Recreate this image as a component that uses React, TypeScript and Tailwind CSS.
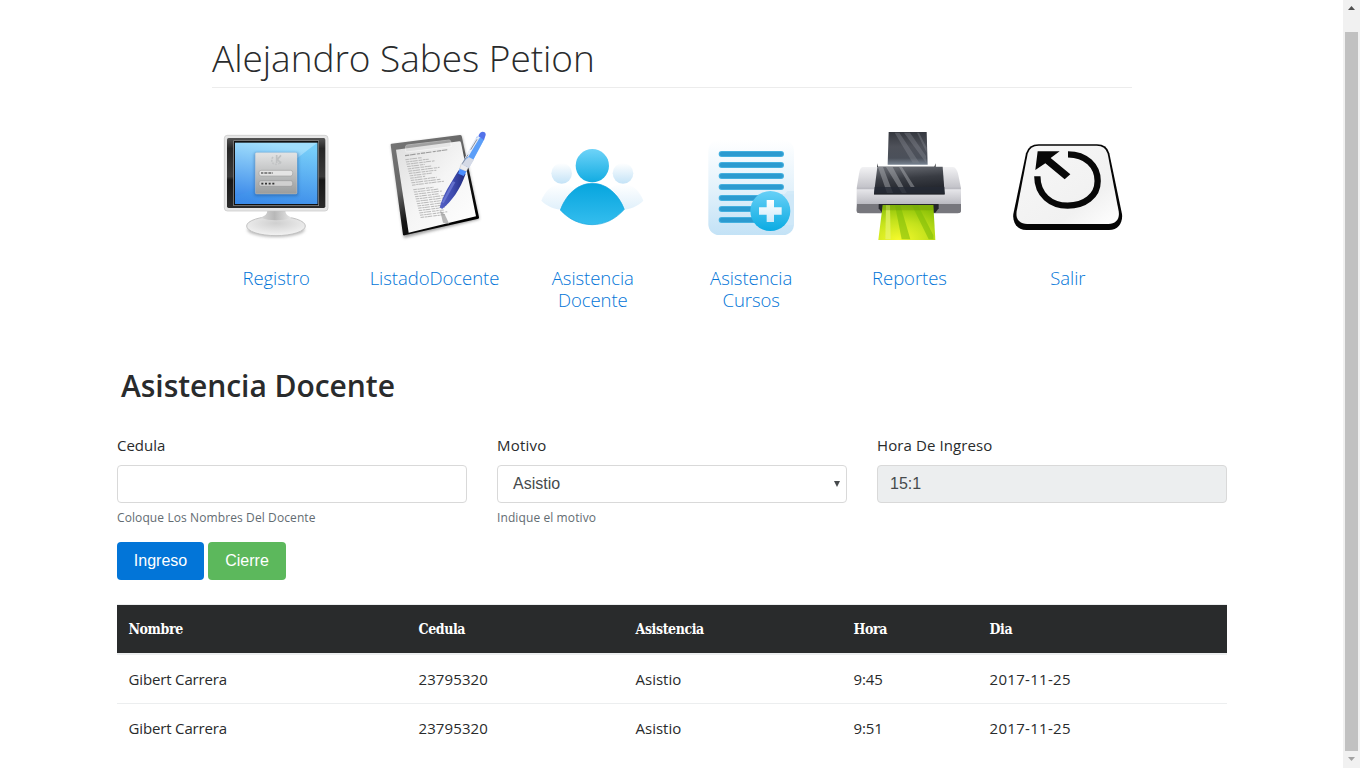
import type { ReactNode } from "react";

function Icon({ box, children }: { box: string; children: ReactNode }) {
  return (
    <svg viewBox={box} className="block h-32 w-32 overflow-visible">
      {children}
    </svg>
  );
}

function MonitorIcon() {
  return (
    <Icon box="36 21 384 384">
      <defs>
        <linearGradient id="mScreen" x1="0.3" y1="0" x2="0.1" y2="1">
          <stop offset="0" stopColor="#a0defc" />
          <stop offset="1" stopColor="#3181e8" />
        </linearGradient>
        <linearGradient id="mGlare" x1="0.6" y1="0" x2="0.4" y2="1">
          <stop offset="0" stopColor="#5cc4f7" />
          <stop offset="1" stopColor="#3f90ea" />
        </linearGradient>
        <linearGradient id="mPanel" x1="0" y1="0" x2="0" y2="1">
          <stop offset="0" stopColor="#e3e4e5" />
          <stop offset="1" stopColor="#9a9c9c" />
        </linearGradient>
        <linearGradient id="mBezel" x1="0" y1="0" x2="0" y2="1">
          <stop offset="0" stopColor="#555" />
          <stop offset="0.15" stopColor="#262626" />
          <stop offset="0.55" stopColor="#3a3a3a" />
          <stop offset="0.6" stopColor="#181818" />
          <stop offset="1" stopColor="#2b2b2b" />
        </linearGradient>
        <linearGradient id="mNeck" x1="0" y1="0" x2="1" y2="0">
          <stop offset="0" stopColor="#d8d8d8" />
          <stop offset="0.45" stopColor="#b8b8b8" />
          <stop offset="1" stopColor="#e8e8e8" />
        </linearGradient>
        <radialGradient id="mFoot" cx="0.5" cy="0.35" r="0.6">
          <stop offset="0" stopColor="#cfcfcf" />
          <stop offset="1" stopColor="#f0f0f0" />
        </radialGradient>
        <filter id="mBlur" x="-20%" y="-50%" width="140%" height="200%">
          <feGaussianBlur stdDeviation="5" />
        </filter>
      </defs>
      <ellipse cx="228" cy="344" rx="86" ry="22" fill="#777" opacity="0.5" filter="url(#mBlur)" />
      <ellipse cx="228" cy="333" rx="88" ry="29" fill="url(#mFoot)" stroke="#c2c2c2" strokeWidth="3" />
      <path d="M202 284h54c0 14 6 17 20 24-26 10-68 10-95 0 15-7 21-10 21-24z" fill="url(#mNeck)" />
      <rect x="73" y="61" width="311" height="227" rx="9" fill="#e6e6e6" stroke="#c4c4c4" strokeWidth="2" />
      <rect x="81" y="69" width="295" height="210" rx="5" fill="url(#mBezel)" />
      <rect x="101" y="77" width="255" height="195" fill="#111" stroke="#999" strokeWidth="2" />
      <rect x="105" y="83" width="247" height="184" fill="url(#mScreen)" />
      <path d="M352 83v184H105v-22C190 220 260 150 352 83z" fill="url(#mGlare)" opacity="0.6" />
      <rect x="163" y="113" width="132" height="130" rx="5" fill="#174a86" opacity="0.45" filter="url(#mBlur)" />
      <rect x="166" y="113" width="125" height="124" rx="4" fill="url(#mPanel)" stroke="#ddd" />
      <path d="M230 120v24M243 121l-11 12 11 12" fill="none" stroke="#bfc1c2" strokeWidth="5" />
      <path d="M219 126c-7 9-4 22 9 22 9 0 13-5 14-9" fill="none" stroke="#c3c5c6" strokeWidth="5" strokeDasharray="6 3" />
      <rect x="177" y="166" width="101" height="17" rx="6" fill="#e4e4e4" stroke="#a2a2a2" strokeWidth="2" />
      <rect x="177" y="197" width="101" height="17" rx="6" fill="#d0d0d0" stroke="#9a9a9a" strokeWidth="2" />
      <path d="M183 174h35" stroke="#666" strokeWidth="5" strokeDasharray="6 2 3 1" />
      <path d="M184 206h40" stroke="#333" strokeWidth="5" strokeDasharray="6 5" />
    </Icon>
  );
}

const verses = [52, 70, 86, 54, 72, 96, 84, 68, 46, 80, 90, 98, 0, 62, 78, 84, 72, 88, 92, 82, 86, 88, 80, 76, 84, 76];

function ClipboardIcon() {
  return (
    <Icon box="0 21 384 384">
      <defs>
        <linearGradient id="cBoard" x1="0" y1="0" x2="0.6" y2="1">
          <stop offset="0" stopColor="#777" />
          <stop offset="0.45" stopColor="#666" />
          <stop offset="0.7" stopColor="#161616" />
          <stop offset="1" stopColor="#000" />
        </linearGradient>
        <linearGradient id="cPaper" x1="0" y1="0" x2="1" y2="1">
          <stop offset="0" stopColor="#dedede" />
          <stop offset="0.5" stopColor="#f5f5f5" />
          <stop offset="1" stopColor="#fff" />
        </linearGradient>
        <linearGradient id="cPen" x1="0" y1="0" x2="1" y2="0">
          <stop offset="0" stopColor="#5561c4" />
          <stop offset="0.5" stopColor="#3f4cb0" />
          <stop offset="1" stopColor="#202b7c" />
        </linearGradient>
        <filter id="cBlur" x="-20%" y="-20%" width="140%" height="140%">
          <feGaussianBlur stdDeviation="4" />
        </filter>
      </defs>
      <path d="M64 91L275 64 328 313 102 369z" fill="#444" opacity="0.5" filter="url(#cBlur)" />
      <path d="M65 86Q62 86 62 89L99 359Q100 362 104 361L325 311Q328 310 327 307L275 63Q274 60 270 60z" fill="url(#cBoard)" />
      <path d="M78 104L268 79Q272 79 273 83L318 304 116 353z" fill="url(#cPaper)" />
      <path d="M107 94Q108 90 112 90L237 75Q241 75 242 79L244 95 110 111Q107 111 107 107z" fill="#ddd" opacity="0.45" stroke="#fff" strokeWidth="3" />
      <g transform="rotate(-8 105 122)">
        <path d="M105 122h130" stroke="#9c9c9c" strokeWidth="3.5" strokeDasharray="13 2 17 4 9 3" />
      </g>
      <g transform="translate(106 134) skewX(8) rotate(-7)">
        {verses.map((width, index) => (
          <path key={index} d={`M0 ${index * 7}h${width}`} stroke="#bababa" strokeWidth="3" strokeDasharray="11 2 7 1 15 3" />
        ))}
      </g>
      <path d="M210 286L219 323 238 327 225 300z" fill="#9a9a9a" opacity="0.7" />
      <path d="M266 166L287 176C270 224 246 258 216 282L209 279C217 242 242 205 266 166z" fill="url(#cPen)" />
      <path d="M248 199L256 202 221 265 216 262z" fill="#7480d8" opacity="0.7" />
      <path d="M215 279l-7 13-1-14z" fill="#eee" />
      <path d="M269 160L290 169 281 183 265 176z" fill="#4b8fff" />
      <path d="M274 146L296 157 289 169 269 161z" fill="#ececef" stroke="#aaa" strokeWidth="1" />
      <path d="M321 64L342 74 297 158 275 147z" fill="#9fc3f8" />
      <path d="M331 67L343 72 308 137 289 130z" fill="#5b9ef8" />
      <path d="M296 126L312 134 297 158 275 147z" fill="#d5dae6" />
      <path d="M313 75l12-10 4 2-34 58-12 6z" fill="#e9eef8" />
      <path d="M294 119L277 146M321 73L302 104" stroke="#8a8f9a" strokeWidth="3" />
      <path d="M325 64Q329 51 337 50 348 50 347 60L342 75z" fill="#5272ea" />
    </Icon>
  );
}

function PeopleIcon() {
  return (
    <Icon box="-4 -24 384 384">
      <defs>
        <linearGradient id="pHead" x1="0" y1="0" x2="0" y2="1">
          <stop offset="0" stopColor="#6ed3f8" />
          <stop offset="1" stopColor="#12ace2" />
        </linearGradient>
        <linearGradient id="pBody" x1="0" y1="0" x2="0" y2="1">
          <stop offset="0" stopColor="#06a5de" />
          <stop offset="1" stopColor="#34bdee" />
        </linearGradient>
        <linearGradient id="pSide" x1="0" y1="0" x2="0" y2="1">
          <stop offset="0" stopColor="#fff" />
          <stop offset="1" stopColor="#c4e3f7" />
        </linearGradient>
        <linearGradient id="pSideBody" x1="0" y1="0" x2="0" y2="1">
          <stop offset="0" stopColor="#fff" />
          <stop offset="1" stopColor="#e0f0fb" />
        </linearGradient>
      </defs>
      <circle cx="94" cy="130" r="31" fill="url(#pSide)" />
      <circle cx="278" cy="130" r="31" fill="url(#pSide)" />
      <path d="M33 212C44 184 62 163 94 162 130 162 150 190 156 222 115 252 60 240 33 212z" fill="url(#pSideBody)" />
      <path d="M339 212C328 184 310 163 278 162 242 162 222 190 216 222 257 252 312 240 339 212z" fill="url(#pSideBody)" />
      <path d="M87 241C106 193 140 157 186 157S266 193 285 239C257 270 224 287 186 287S116 271 87 241z" fill="#fff" />
      <circle cx="186" cy="107" r="50" fill="url(#pHead)" />
      <path d="M90 240C107 193 143 160 186 160S265 193 282 238C255 268 222 284 186 284S116 269 90 240z" fill="url(#pBody)" stroke="#12a5de" strokeWidth="2" />
    </Icon>
  );
}

function CourseIcon() {
  return (
    <Icon box="-24 -24 384 384">
      <defs>
        <linearGradient id="lPage" x1="0" y1="0" x2="0" y2="1">
          <stop offset="0" stopColor="#fff" />
          <stop offset="0.5" stopColor="#e4f2fb" />
          <stop offset="1" stopColor="#c3e2f6" />
        </linearGradient>
        <linearGradient id="lDisc" x1="0" y1="0" x2="0" y2="1">
          <stop offset="0" stopColor="#67d0f7" />
          <stop offset="1" stopColor="#0babe2" />
        </linearGradient>
        <linearGradient id="lPlus" x1="0" y1="0" x2="0" y2="1">
          <stop offset="0" stopColor="#fff" />
          <stop offset="1" stopColor="#cdeafa" />
        </linearGradient>
      </defs>
      <rect x="40" y="30" width="257" height="285" rx="32" fill="url(#lPage)" />
      {[72, 105, 138, 171, 204, 237, 270].map((y) => (
        <g key={y} strokeLinecap="round">
          <path d={`M80 ${y}h178`} stroke="#44b0df" strokeWidth="18" />
          <path d={`M80 ${y}h178`} stroke="#2c9bd0" strokeWidth="12" />
        </g>
      ))}
      <path d="M226 243h71v-60h-20z" fill="#d3eaf8" />
      <path d="M240 193h57v92h-57z" fill="#cfe8f8" />
      <circle cx="226" cy="243" r="60" fill="url(#lDisc)" />
      <path d="M215 210h22v22h23v22h-23v22h-22v-22h-23v-22h23z" fill="url(#lPlus)" />
    </Icon>
  );
}

function PrinterIcon() {
  return (
    <Icon box="1 6 384 384">
      <defs>
        <linearGradient id="rBody" x1="0" y1="0" x2="0" y2="1">
          <stop offset="0" stopColor="#f2f2f4" />
          <stop offset="0.45" stopColor="#c2c2c8" />
          <stop offset="0.5" stopColor="#e4e4e8" />
          <stop offset="0.85" stopColor="#b4b4bb" />
          <stop offset="1" stopColor="#74747b" />
        </linearGradient>
        <linearGradient id="rLid" x1="0" y1="0" x2="0.2" y2="1">
          <stop offset="0" stopColor="#6d7077" />
          <stop offset="0.5" stopColor="#393c43" />
          <stop offset="1" stopColor="#20232a" />
        </linearGradient>
        <linearGradient id="rTray" x1="0" y1="0" x2="0" y2="1">
          <stop offset="0" stopColor="#34373e" />
          <stop offset="0.45" stopColor="#4e5159" />
          <stop offset="0.8" stopColor="#4b505a" />
          <stop offset="1" stopColor="#788391" />
        </linearGradient>
        <radialGradient id="rSheet" cx="0.35" cy="1" r="1">
          <stop offset="0" stopColor="#f6fa2c" />
          <stop offset="0.55" stopColor="#c4e21c" />
          <stop offset="1" stopColor="#8cc208" />
        </radialGradient>
      </defs>
      <path d="M132 36h114l3 98H129z" fill="url(#rTray)" />
      <path d="M150 38h14l60 90h-20zM178 38h18l48 70v20zM217 38h6l23 45v15z" fill="#8d9098" opacity="0.35" />
      <path d="M97 130l3 10h169l4-10v14H97z" fill="#2a2c31" />
      <path d="M54 141H325Q336 142 341 165L349 205V270Q349 280 339 280H46Q36 280 36 270V205L43 162Q46 141 54 141z" fill="url(#rBody)" />
      <path d="M37 205H90M300 205H348" stroke="#aaaab2" strokeWidth="2" />
      <path d="M98 140H294L300 221H88z" fill="url(#rLid)" />
      <path d="M100 141h15l30 78h-18zM124 141h20l42 78h-14zM163 141h9l38 60h-12z" fill="#b2b4b8" opacity="0.45" />
      <path d="M90 201H299L300 223H88z" fill="#252b36" opacity="0.8" />
      <path d="M88 222H300" stroke="#16181d" strokeWidth="3" />
      <path d="M37 252H102L111 265 108 279H40Q36 278 36 272zM349 252H282L269 264 272 279H343Q349 278 349 272z" fill="#77777d" />
      <path d="M102 252H282V265L272 278H112L102 265z" fill="#24262b" />
      <path d="M114 255H266L272 360H101z" fill="url(#rSheet)" />
      <path d="M151 256h16l30 102h-26zM202 256h18l46 90v12h-14z" fill="#7fbd08" opacity="0.6" />
      <path d="M124 256h12l2 102h-16z" fill="#e8f477" opacity="0.65" />
      <path d="M114 255H266l1 16H113z" fill="#668f0a" opacity="0.35" />
    </Icon>
  );
}

function ExitIcon() {
  return (
    <Icon box="11 -24 384 384">
      <defs>
        <linearGradient id="eFace" x1="0" y1="0" x2="1" y2="1">
          <stop offset="0" stopColor="#f7f7f7" />
          <stop offset="0.7" stopColor="#f1f1f1" />
          <stop offset="1" stopColor="#fff" />
        </linearGradient>
      </defs>
      <path d="M115 43H290Q320 43 327 70L365 252C368 278 354 300 326 300H78C51 300 36 278 39 252L77 70Q85 43 115 43z" fill="#050505" />
      <path d="M115 47H289Q315 47 322 71L355 244C359 268 346 282 324 282H81C58 282 45 268 49 244L82 71Q89 47 115 47z" fill="url(#eFace)" />
      <path d="M203 73C256 73 292 107 292 153S252 227 202 227 111 195 111 139" fill="none" stroke="#080808" strokeWidth="19" />
      <path d="M112 64H178L151 84 210 133 193 148 135 100 105 120z" fill="#080808" />
    </Icon>
  );
}

const menu: { title: string; icon: ReactNode }[] = [
  { title: "Registro", icon: <MonitorIcon /> },
  { title: "ListadoDocente", icon: <ClipboardIcon /> },
  { title: "Asistencia Docente", icon: <PeopleIcon /> },
  { title: "Asistencia Cursos", icon: <CourseIcon /> },
  { title: "Reportes", icon: <PrinterIcon /> },
  { title: "Salir", icon: <ExitIcon /> },
];

const columns = ["Nombre", "Cedula", "Asistencia", "Hora", "Dia"];
const rows = [
  ["Gibert Carrera", "23795320", "Asistio", "9:45", "2017-11-25"],
  ["Gibert Carrera", "23795320", "Asistio", "9:51", "2017-11-25"],
];
const cellSpacing = ["tracking-[-0.15px]", "tracking-[0.1px]", "", "tracking-[-0.1px]", "tracking-[0.3px]"];

function Scrollbar() {
  return (
    <div className="flex w-[17px] shrink-0 flex-col items-center bg-[#f1f1f1]">
      <div className="flex h-8 items-start pt-[6px]">
        <svg viewBox="0 0 7 4" className="h-1 w-[7px]">
          <path d="M0 4L3.5 0 7 4z" fill="#505050" />
        </svg>
      </div>
      <div className="h-[719px] w-[13px] bg-[#c1c1c1]" />
      <div className="flex h-4 items-center">
        <svg viewBox="0 0 7 4" className="h-1 w-[7px]">
          <path d="M0 0L3.5 4 7 0z" fill="#a3a3a3" />
        </svg>
      </div>
    </div>
  );
}

export default function App() {
  return (
    <div className="flex h-[768px] w-[1360px] overflow-hidden bg-white font-['Open_Sans',sans-serif] text-[15px] text-[#292b2c]">
      <main className="flex-1 pl-[117px]">
        <div className="ml-[80px] w-[950px]">
          <header className="mx-[15px] h-[88px] border-b border-[#ececec] pt-[33px]">
            <h1 className="text-[37px] leading-[50px] font-light tracking-[-0.04px] whitespace-nowrap">Alejandro Sabes Petion</h1>
          </header>
          <nav className="grid h-[266px] grid-cols-6 pt-[34px]">
            {menu.map((item) => (
              <a key={item.title} className="flex flex-col items-center">
                {item.icon}
                <span className="mt-[17px] w-[134px] text-center text-[18.5px] leading-[22px] font-light tracking-[-0.05px] text-[#0275d8]">
                  {item.title}
                </span>
              </a>
            ))}
          </nav>
        </div>

        <div className="w-[1110px]">
          <h2 className="ml-1 h-[76px] pt-[13px] text-[30px] leading-[38px] font-semibold tracking-[-0.05px]">Asistencia Docente</h2>
          <form className="grid h-[112px] grid-cols-3 gap-x-[30px]">
            <div className="flex flex-col">
              <label className="h-[35px] pt-[3px] leading-6">Cedula</label>
              <input className="h-[38px] rounded border border-[#d9d9d9] px-3" />
              <small className="mt-[5px] text-[12px] leading-[20px] tracking-[0.1px] text-[#636c72]">Coloque Los Nombres Del Docente</small>
            </div>
            <div className="flex flex-col">
              <label className="h-[35px] pt-[3px] leading-6 tracking-[0.2px]">Motivo</label>
              <div className="flex h-[38px] items-center justify-between rounded border border-[#d9d9d9] pr-[6px] pl-[15px] font-['Liberation_Sans',sans-serif] text-base text-[#464a4c]">
                <span>Asistio</span>
                <svg viewBox="0 0 6 6" className="h-[6px] w-[6px]">
                  <path d="M0 0h6L3 6z" fill="#464a4c" />
                </svg>
              </div>
              <small className="mt-[5px] text-[12px] leading-[20px] tracking-[0.1px] text-[#636c72]">Indique el motivo</small>
            </div>
            <div className="flex flex-col">
              <label className="h-[35px] pt-[3px] leading-6 tracking-[0.1px]">Hora De Ingreso</label>
              <input
                readOnly
                value="15:1"
                className="h-[38px] rounded border border-[#d9d9d9] bg-[#eceeef] px-3 font-['Liberation_Sans',sans-serif] text-base text-[#464a4c]"
              />
            </div>
          </form>
          <div className="flex h-[62px] gap-1 font-['Liberation_Sans',sans-serif] text-base text-white">
            <button className="h-[38px] w-[87px] rounded bg-[#0275d8]">Ingreso</button>
            <button className="h-[38px] w-[78px] rounded bg-[#5cb85c]">Cierre</button>
          </div>
          <div className="border-t border-[#eceeef]">
            <div className="grid h-[50px] grid-cols-[290px_217px_218px_136px_249px] items-center border-b-2 border-[#eceeef] bg-[#292b2c] bg-clip-padding font-['DejaVu_Serif_Condensed','DejaVu_Serif',serif] text-[14px] font-bold tracking-[-0.4px] text-white">
              {columns.map((name) => (
                <div key={name} className="pl-[11.5px]">{name}</div>
              ))}
            </div>
            {rows.map((cells, index) => (
              <div key={index} className="grid h-[49px] grid-cols-[290px_217px_218px_136px_249px] items-center border-b border-[#eceeef] last:border-transparent">
                {cells.map((cell, column) => (
                  <div key={cell} className={`pl-[11.5px] ${cellSpacing[column]}`}>{cell}</div>
                ))}
              </div>
            ))}
          </div>
        </div>
      </main>
      <Scrollbar />
    </div>
  );
}
